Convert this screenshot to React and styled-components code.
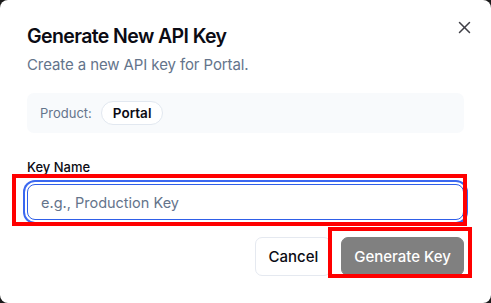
import * as React from "react";
import styled, { createGlobalStyle } from 'styled-components';

const GlobalStyle = createGlobalStyle`
    html, body {
        margin: 0;
        padding: 0;
        background: #1a1a1a;
    }
    body {
        font-family: Inter, "Noto Sans", "Liberation Sans", sans-serif;
        -webkit-font-smoothing: antialiased;
    }
`;

const Dialog = styled.div`
    position: relative;
    box-sizing: border-box;
    width: 491px;
    height: 303px;
    background: #ffffff;
    border-radius: 8px;
    padding: 22px 27px 0 27px;
    display: flex;
    flex-direction: column;
`;

const CloseButton = styled.button`
    position: absolute;
    top: 19px;
    right: 19px;
    width: 16px;
    height: 16px;
    padding: 0;
    border: none;
    background: transparent;
    display: flex;
    align-items: center;
    justify-content: center;
    color: #3f3f46;
`;

const Title = styled.h2`
    margin: 0;
    font-size: 19.5px;
    line-height: 28px;
    font-weight: 600;
    color: #0b0b14;
    letter-spacing: -0.6px;
`;

const Subtitle = styled.p`
    margin: 4px 0 0 0;
    font-size: 15px;
    line-height: 22px;
    color: #64748b;
    letter-spacing: -0.1px;
`;

const ProductBox = styled.div`
    margin-top: 17px;
    height: 40px;
    box-sizing: border-box;
    padding: 0 13px;
    background: #f8fafc;
    border-radius: 7px;
    display: flex;
    align-items: center;
    gap: 9px;
`;

const ProductLabel = styled.span`
    font-size: 13px;
    color: #64748b;
`;

const Pill = styled.span`
    box-sizing: border-box;
    height: 24px;
    padding: 0 11px;
    border: 1px solid #e2e8f0;
    border-radius: 999px;
    background: #ffffff;
    display: inline-flex;
    align-items: center;
    font-size: 13.5px;
    font-weight: 600;
    color: #0b0b14;
`;

const FieldLabel = styled.label`
    margin-top: 24px;
    font-size: 13px;
    line-height: 20px;
    font-weight: 500;
    color: #0b0b14;
`;

const Field = styled.div`
    position: relative;
    margin-top: 7px;
`;

const Input = styled.input`
    box-sizing: border-box;
    width: 100%;
    height: 36px;
    padding: 0 13px;
    border: 1px solid #2f5fe8;
    border-radius: 8px;
    outline: none;
    box-shadow: 0 0 0 2px #ffffff, 0 0 0 4px #3b68f0;
    font-family: inherit;
    font-size: 14.5px;
    color: #0b0b14;
    &::placeholder {
        color: #64748b;
    }
`;

const Actions = styled.div`
    margin-top: 17px;
    display: flex;
    justify-content: flex-end;
    gap: 10px;
`;

const ButtonWrap = styled.div`
    position: relative;
`;

const Button = styled.button`
    box-sizing: border-box;
    height: 39px;
    padding: 0 12px;
    border-radius: 7px;
    font-family: inherit;
    font-size: 15px;
    font-weight: 500;
    border: 1px solid ${p => p.$primary ? '#808080' : '#e5e9f0'};
    background: ${p => p.$primary ? '#808080' : '#ffffff'};
    color: ${p => p.$primary ? '#ffffff' : '#0b0b14'};
`;

// red annotation frames drawn over the screenshot
const Highlight = styled.div`
    position: absolute;
    top: ${p => p.$top}px;
    left: ${p => p.$left}px;
    right: ${p => p.$right}px;
    bottom: ${p => p.$bottom}px;
    border: 4px solid #ff0000;
    pointer-events: none;
`;

const CloseIcon = () => (
    <svg width="13" height="13" viewBox="0 0 13 13" fill="none" stroke="currentColor" strokeWidth="1.5" strokeLinecap="round">
        <line x1="1.5" y1="1.5" x2="11.5" y2="11.5" />
        <line x1="11.5" y1="1.5" x2="1.5" y2="11.5" />
    </svg>
);

const App = () => {
    return (
        <>
            <GlobalStyle />
            <Dialog>
                <CloseButton aria-label="Close"><CloseIcon /></CloseButton>
                <Title>Generate New API Key</Title>
                <Subtitle>Create a new API key for Portal.</Subtitle>
                <ProductBox>
                    <ProductLabel>Product:</ProductLabel>
                    <Pill>Portal</Pill>
                </ProductBox>
                <FieldLabel htmlFor="key-name">Key Name</FieldLabel>
                <Field>
                    <Input id="key-name" placeholder="e.g., Production Key" />
                    <Highlight $top={-10} $left={-15} $right={-3} $bottom={-6} />
                </Field>
                <Actions>
                    <Button>Cancel</Button>
                    <ButtonWrap>
                        <Button $primary>Generate Key</Button>
                        <Highlight $top={-10} $left={-13} $right={-8} $bottom={-2} />
                    </ButtonWrap>
                </Actions>
            </Dialog>
        </>
    );
};

export default App;
